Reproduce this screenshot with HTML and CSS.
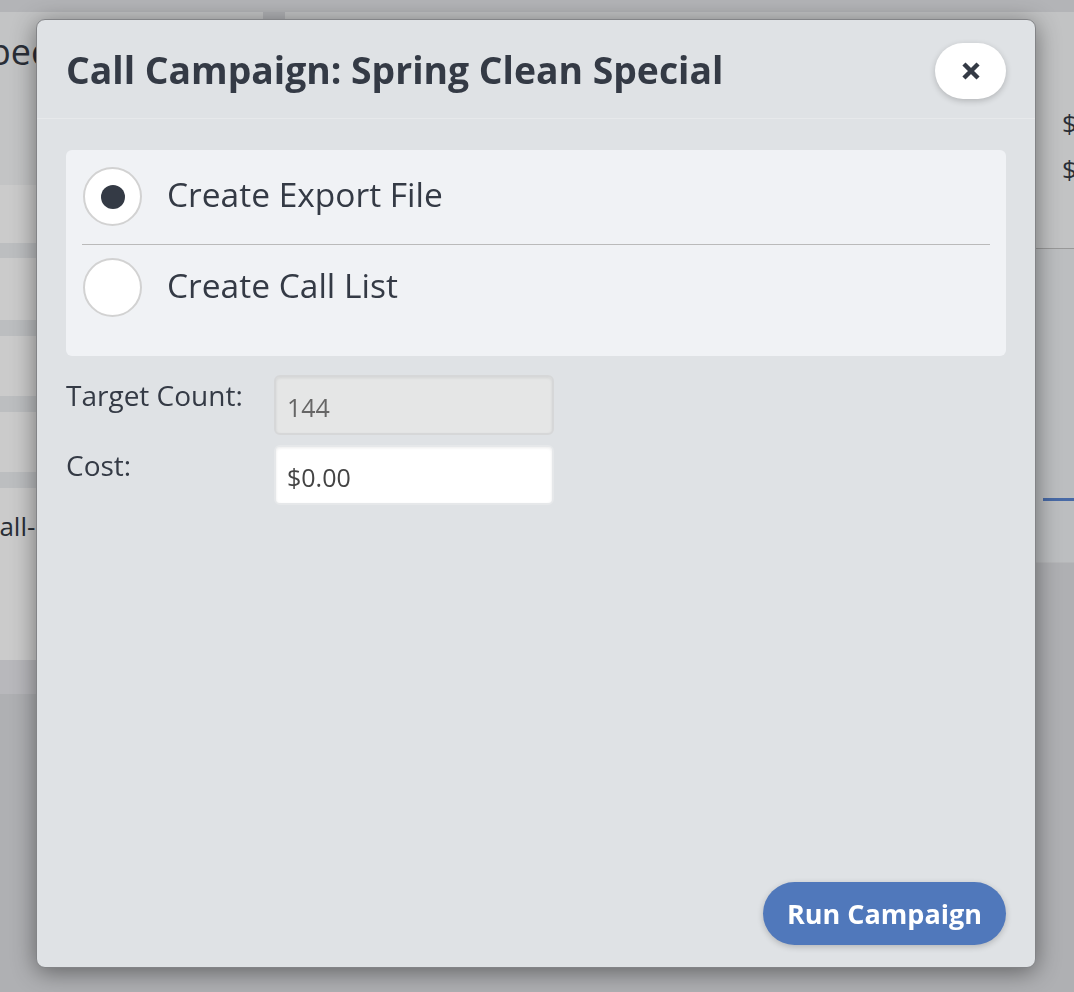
FILE: index.html
```html
<!DOCTYPE html>
<html lang="en">
<head>
  <meta charset="UTF-8" />
  <meta name="viewport" content="width=device-width, initial-scale=1.0" />
  <title>Call Campaign</title>
  <link rel="stylesheet" href="styles.css">
</head>
<body>

  <div class="page">
    <div class="topbar"></div>
    <div class="layout">
      <aside class="side">
        <div class="side-head">
          <h1>Special</h1>
        </div>
        <ul class="side-list">
          <li class="row-a"></li>
          <li class="row-b"></li>
          <li></li>
          <li></li>
          <li class="side-note">Call-in list</li>
        </ul>
        <div class="side-foot"></div>
      </aside>

      <main class="main">
        <div class="summary">
          <div class="summary-row"><span>Budget</span><span class="amount">$1,200.00</span></div>
          <div class="summary-row"><span>Spent</span><span class="amount">$0.00</span></div>
        </div>
        <div class="panel-area">
          <nav class="tabs">
            <a href="#">Overview</a>
            <a href="#" class="active">Targets</a>
          </nav>
        </div>
      </main>
    </div>
  </div>

  <div class="overlay"></div>

  <div class="modal">
    <div class="modal-header">
      <h2>Call Campaign: Spring Clean Special</h2>
      <button class="close-btn" type="button" aria-label="Close">
        <svg width="18" height="18" viewBox="0 0 18 18">
          <path d="M3.5 3.5 L14.5 14.5 M14.5 3.5 L3.5 14.5" stroke="#343a45" stroke-width="4.4" stroke-linecap="square" />
        </svg>
      </button>
    </div>

    <div class="modal-body">
      <div class="options">
        <label class="option first">
          <span class="radio checked"></span>
          <span class="option-text">Create Export File</span>
        </label>
        <label class="option">
          <span class="radio"></span>
          <span class="option-text">Create Call List</span>
        </label>
      </div>

      <div class="field">
        <span class="field-label">Target Count:</span>
        <input class="field-input" type="text" value="144" disabled />
      </div>
      <div class="field">
        <span class="field-label">Cost:</span>
        <input class="field-input cost" type="text" value="$0.00" />
      </div>

      <div class="modal-footer">
        <button class="run-btn" type="button">Run Campaign</button>
      </div>
    </div>
  </div>

</body>
</html>
```

FILE: styles.css
```css
html, body {
  margin: 0;
  height: 100%;
  overflow: hidden;
}

body {
  font-family: "Open Sans", Arial, sans-serif;
  background: #dbdce0;
  color: #343a45;
}

/* page behind the dialog */
.page {
  width: 1200px;
}

.topbar {
  height: 12px;
  background: #e0e1e5;
}

.layout {
  display: flex;
  gap: 22px;
}

.side {
  width: 263px;
}

.side-head {
  height: 173px;
  background: #f4f5f7;
  overflow: hidden;
}

.side-head h1 {
  margin: 15px 0 0;
  font-size: 36px;
  font-weight: 400;
  text-indent: -31px;
}

.side-list {
  list-style: none;
  margin: 0;
  padding: 0;
  background: #eceef1;
}

.side-list li {
  height: 60px;
  background: #fefefe;
  margin-bottom: 16px;
}

.side-list li.row-a {
  height: 58px;
  margin-bottom: 15px;
}

.side-list li.row-b {
  height: 62px;
}

.side-list li.side-note {
  height: 172px;
  margin-bottom: 0;
  padding-top: 20px;
  box-sizing: border-box;
  font-size: 26px;
  text-indent: -17px;
}

.side-foot {
  height: 34px;
  background: #e6e7eb;
}

.main {
  flex: 1;
}

.summary {
  height: 237px;
  background: #f3f4f6;
  border-bottom: 1px solid #c0c0c0;
  padding: 88px 20px 0;
  box-sizing: border-box;
}

.summary-row {
  display: grid;
  grid-template-columns: 1fr 118px;
  font-size: 26px;
  line-height: 46px;
}

.panel-area {
  height: 314px;
  background: #eceef0;
  border-bottom: 1px solid #e4e5e8;
  display: flex;
  flex-direction: column;
  justify-content: flex-end;
  padding-bottom: 61px;
  box-sizing: border-box;
}

.tabs {
  display: flex;
  justify-content: flex-end;
  padding-right: 20px;
}

.tabs a {
  color: #343a45;
  text-decoration: none;
  font-size: 0;
  width: 137px;
  height: 3px;
}

.tabs a.active {
  background: #5a85d0;
}

.overlay {
  position: fixed;
  inset: 0;
  background: rgba(0, 0, 0, 0.2);
}

/* dialog */
.modal {
  position: absolute;
  left: 36px;
  top: 19px;
  width: 1000px;
  height: 949px;
  box-sizing: border-box;
  border: 1px solid #838487;
  border-radius: 9px;
  background: #dfe2e5;
  box-shadow: 0 4px 24px rgba(0, 0, 0, 0.45);
  display: flex;
  flex-direction: column;
}

.modal-header {
  display: flex;
  justify-content: space-between;
  align-items: flex-start;
  padding: 23px 29px 19px;
  border-bottom: 1px solid #e7e9eb;
}

.modal-header h2 {
  margin: 0;
  padding-top: 1px;
  font-size: 37.3px;
  font-weight: 700;
  color: #343a45;
}

.close-btn {
  width: 71px;
  height: 56px;
  border: none;
  border-radius: 28px;
  background: #fff;
  box-shadow: 0 2px 6px rgba(0, 0, 0, 0.2);
  display: flex;
  align-items: center;
  justify-content: center;
  cursor: pointer;
  padding: 0;
}

.modal-body {
  flex: 1;
  display: flex;
  flex-direction: column;
  padding: 31px 29px 22px;
}

.options {
  background: #f0f2f5;
  border-radius: 6px;
  padding: 17px 16px 39px;
}

.option {
  display: flex;
  align-items: center;
  gap: 25px;
  padding: 0 1px;
  cursor: pointer;
}

.option.first {
  padding-bottom: 18px;
  margin-bottom: 13px;
  border-bottom: 1px solid #bababa;
}

.radio {
  width: 59px;
  height: 59px;
  box-sizing: border-box;
  border: 2px solid #d2d2d2;
  border-radius: 50%;
  background: #fff;
  display: flex;
  align-items: center;
  justify-content: center;
}

.radio.checked::after {
  content: "";
  width: 24px;
  height: 24px;
  border-radius: 50%;
  background: #343a45;
}

.option-text {
  font-size: 33.5px;
  padding-bottom: 6px;
}

.field {
  display: flex;
  align-items: flex-start;
  margin-top: 19px;
}

.field + .field {
  margin-top: 10px;
}

.field-label {
  width: 208px;
  font-size: 28px;
  line-height: 40px;
  padding-top: 0;
}

.field-input {
  width: 280px;
  height: 60px;
  box-sizing: border-box;
  border: 2px solid #d6d7d8;
  border-radius: 6px;
  background: #e5e6e6;
  box-shadow: inset 0 1px 3px rgba(0, 0, 0, 0.08);
  padding: 4px 11px 0;
  font-family: "Open Sans", Arial, sans-serif;
  font-size: 25px;
  color: #666;
}

.field-input.cost {
  background: #fff;
  border-color: #e6e8ea;
  color: #444;
}

.modal-footer {
  margin-top: auto;
  display: flex;
  justify-content: flex-end;
}

.run-btn {
  height: 63px;
  padding: 0 24px;
  border: none;
  border-radius: 32px;
  background: #5078bb;
  color: #fff;
  font-family: "Open Sans", Arial, sans-serif;
  font-size: 27px;
  font-weight: 700;
  box-shadow: 0 2px 6px rgba(0, 0, 0, 0.2);
  cursor: pointer;
}
```
